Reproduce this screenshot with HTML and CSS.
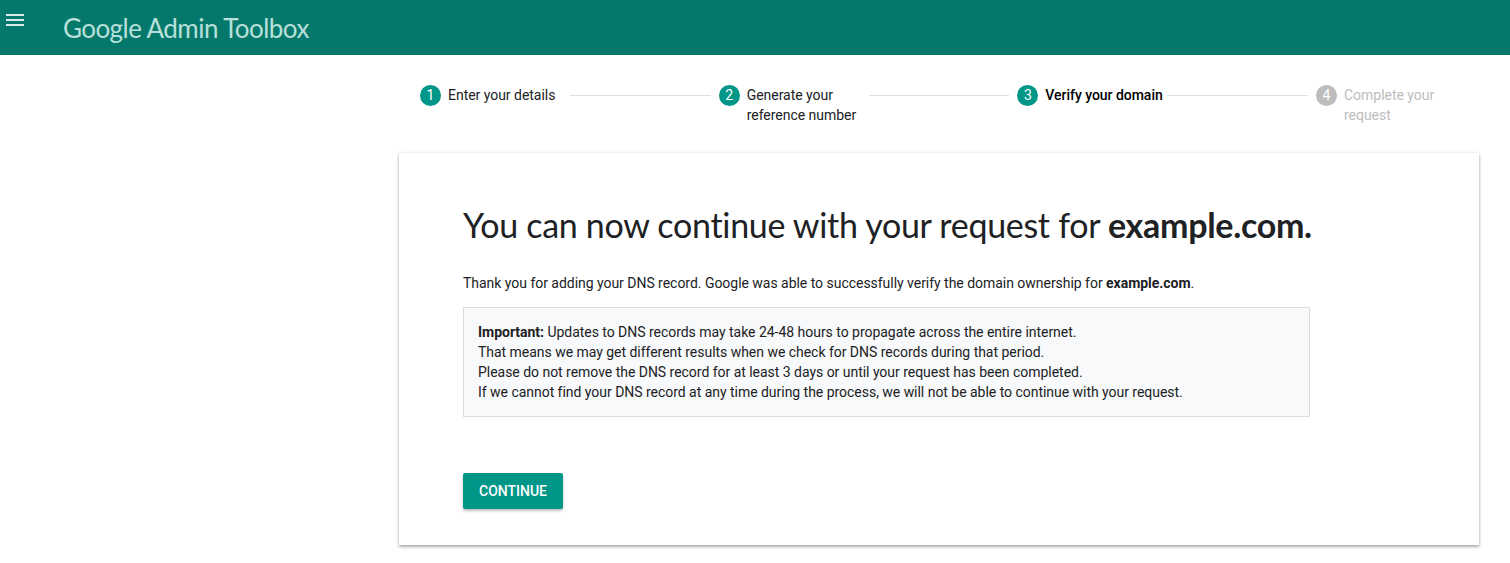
FILE: index.html
```html
<!DOCTYPE html>
<html lang="en">
<head>
<meta charset="utf-8">
<title>Google Admin Toolbox</title>
<link rel="stylesheet" href="styles.css">
</head>
<body>
<header class="topbar">
  <button class="menu-btn" aria-label="Menu">
    <svg viewBox="0 0 24 24" width="24" height="24"><path d="M3 18h18v-2H3v2zm0-5h18v-2H3v2zm0-7v2h18V6H3z" fill="currentColor"/></svg>
  </button>
  <div class="brand">Google Admin Toolbox</div>
</header>
<div class="layout">
  <aside class="sidebar"></aside>
  <main class="main">
    <ol class="stepper">
      <li class="step done"><span class="num">1</span><span class="label">Enter your details</span></li>
      <li class="line"></li>
      <li class="step done"><span class="num">2</span><span class="label">Generate your reference number</span></li>
      <li class="line"></li>
      <li class="step current"><span class="num">3</span><span class="label">Verify your domain</span></li>
      <li class="line"></li>
      <li class="step todo"><span class="num">4</span><span class="label">Complete your request</span></li>
    </ol>
    <section class="card">
      <div class="content">
        <h1 class="title">You can now continue with your request for <b>example.com.</b></h1>
        <p class="lead">Thank you for adding your DNS record. Google was able to successfully verify the domain ownership for <b>example.com</b>.</p>
        <div class="note">
          <b>Important:</b> Updates to DNS records may take 24-48 hours to propagate across the entire internet.<br>
          That means we may get different results when we check for DNS records during that period.<br>
          Please do not remove the DNS record for at least 3 days or until your request has been completed.<br>
          If we cannot find your DNS record at any time during the process, we will not be able to continue with your request.
        </div>
        <button class="primary">CONTINUE</button>
      </div>
    </section>
  </main>
</div>
</body>
</html>
```
FILE: styles.css
```css
* { box-sizing: border-box; }
html, body { margin: 0; padding: 0; background: #fff; }
body { font-family: Roboto, "Liberation Sans", Arial, sans-serif; color: #202124; font-size: 14px; letter-spacing: -0.03px; }

.topbar {
  height: 55px;
  background: #04786a;
  display: flex;
  align-items: flex-start;
}
.menu-btn {
  border: 0;
  background: transparent;
  color: rgba(255,255,255,0.85);
  padding: 0;
  margin: 8px 0 0 3px;
  width: 24px;
  height: 24px;
  display: block;
}
.menu-btn svg { display: block; }
.brand {
  margin-left: 36px;
  margin-top: 11px;
  font-family: Lato, "Open Sans", sans-serif;
  font-size: 26px;
  line-height: 34px;
  letter-spacing: -0.55px;
  color: #b7e0da;
}

.layout {
  display: grid;
  grid-template-columns: 399px 1080px;
}
.main { padding-top: 30px; padding-bottom: 18px; }

.stepper {
  list-style: none;
  margin: 0 13px 0 21px;
  padding: 0;
  display: flex;
  align-items: flex-start;
  height: 68px;
}
.step {
  width: 150px;
  flex: none;
  display: flex;
  align-items: flex-start;
  gap: 7px;
  font-size: 14px;
  line-height: 20px;
}
.num {
  width: 21px;
  height: 21px;
  border-radius: 50%;
  background: #009688;
  color: #fff;
  font-size: 14px;
  line-height: 21px;
  text-align: center;
  flex: none;
}
.label { max-width: 122px; color: #202124; }
.current .label { font-weight: 500; color: #000; }
.todo .num { background: #bdbdbd; }
.todo .label { color: #bdbdbd; }
.line {
  flex: 1;
  height: 1px;
  background: #e0e0e0;
  margin: 10px 8px 0 0;
}

.card {
  background: #fff;
  box-shadow: 0 2px 3px rgba(0,0,0,0.3), 0 0 3px rgba(0,0,0,0.12);
  padding: 50px 64px 36px;
}
.content { width: 847px; }
.title {
  margin: 0;
  font-family: Lato, "Open Sans", sans-serif;
  font-weight: 400;
  font-size: 34px;
  line-height: 44px;
  letter-spacing: -0.3px;
  color: #202124;
  white-space: nowrap;
}
.title b { font-weight: 700; }
.lead {
  margin: 26px 0 14px;
  line-height: 20px;
}
.lead b { font-weight: 700; }
.note {
  background: #f8f9fa;
  border: 1px solid #dadce0;
  padding: 14px;
  line-height: 20px;
}
.primary {
  margin-top: 56px;
  display: block;
  height: 36px;
  padding: 0 16px;
  border: 0;
  border-radius: 2px;
  background: #009688;
  color: #fff;
  font-family: Roboto, sans-serif;
  font-weight: 500;
  font-size: 14px;
  letter-spacing: 0;
  box-shadow: 0 2px 3px rgba(0,0,0,0.25);
}
```
